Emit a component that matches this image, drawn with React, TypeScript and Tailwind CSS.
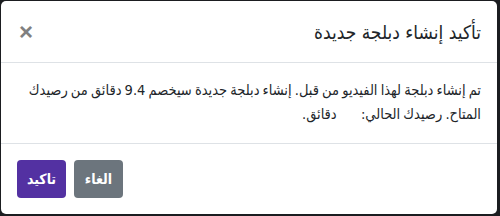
export default function App() {
    return (
        <div className="w-[500px] h-[216px] bg-[#1b1d20] p-[1px] pr-[3px] pb-[2px] font-['DejaVu_Sans_Condensed','DejaVu_Sans',sans-serif]">
            <div dir="rtl" className="bg-white rounded-[5px] h-full flex flex-col text-[#212529]">
                {/* header */}
                <div className="flex items-center justify-between px-4 h-[62px] border-b border-[#dee2e6]">
                    <h5 className="text-[19px] leading-[30px] text-[#212529]">تأكيد إنشاء دبلجة جديدة</h5>
                    <button className="text-[24px] leading-none font-bold text-[#808080] ml-[2px] mt-[1px] font-['Liberation_Sans',sans-serif]">×</button>
                </div>

                {/* body */}
                <div className="px-4 pt-[15px] pb-[17px] text-[14.5px] leading-[24px] [word-spacing:-1px] border-b border-[#dee2e6]">
                    <p className="whitespace-nowrap">
                        تم إنشاء دبلجة لهذا الفيديو من قبل. إنشاء دبلجة جديدة سيخصم 9.4 دقائق من رصيدك
                        <br />
                        المتاح. رصيدك الحالي: <span className="inline-block w-[18px]"></span> دقائق.
                    </p>
                </div>

                {/* footer */}
                <div className="flex items-center justify-end gap-2 px-4 flex-1">
                    <button className="h-[38px] w-[49px] rounded-[4px] bg-[#6c757d] text-white text-[14px] font-bold">الغاء</button>
                    <button className="h-[38px] w-[49px] rounded-[4px] bg-[#5331a2] text-white text-[14px] font-bold">تاكيد</button>
                </div>
            </div>
        </div>
    );
}
